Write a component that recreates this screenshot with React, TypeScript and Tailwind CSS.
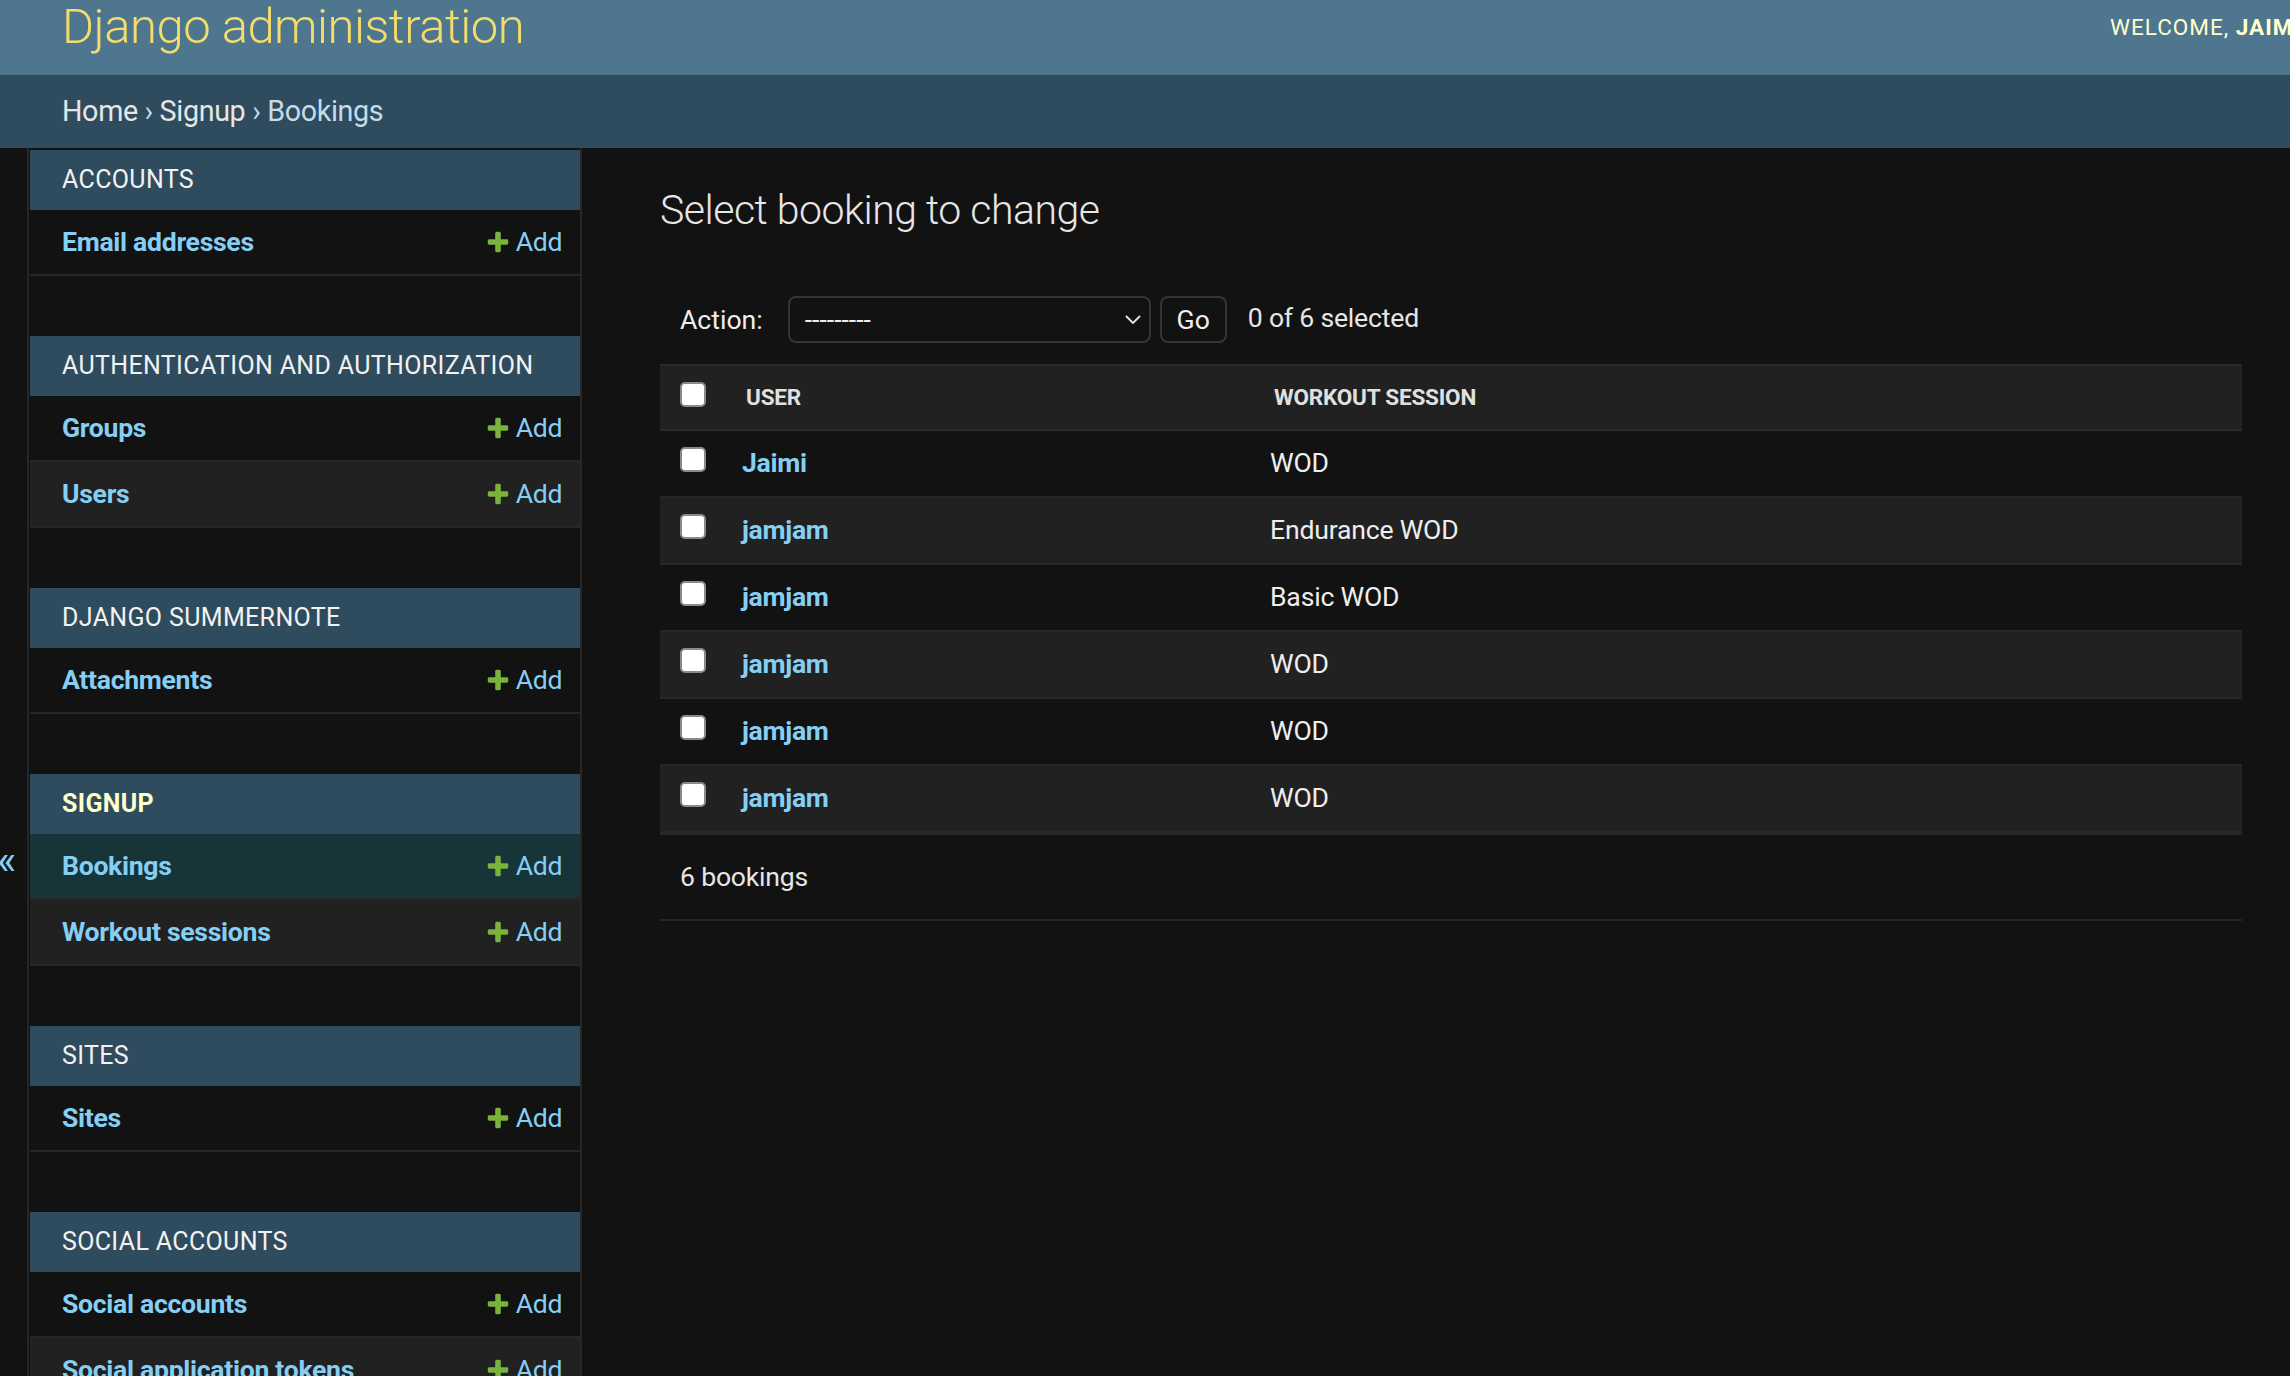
import React from "react";

const modules = [
  { name: "Accounts", models: ["Email addresses"] },
  { name: "Authentication and Authorization", models: ["Groups", "Users"] },
  { name: "Django Summernote", models: ["Attachments"] },
  { name: "Signup", models: ["Bookings", "Workout sessions"], current: true },
  { name: "Sites", models: ["Sites"] },
  {
    name: "Social accounts",
    models: ["Social accounts", "Social application tokens", "Social applications"],
  },
];

const bookings = [
  { user: "Jaimi", session: "WOD" },
  { user: "jamjam", session: "Endurance WOD" },
  { user: "jamjam", session: "Basic WOD" },
  { user: "jamjam", session: "WOD" },
  { user: "jamjam", session: "WOD" },
  { user: "jamjam", session: "WOD" },
];

function PlusIcon() {
  return (
    <svg viewBox="0 0 1792 1792" className="w-[26px] h-[26px] -mx-[3px]" fill="#78b43c">
      <path d="M1600 796v192q0 40-28 68t-68 28h-416v416q0 40-28 68t-68 28h-192q-40 0-68-28t-28-68v-416h-416q-40 0-68-28t-28-68v-192q0-40 28-68t68-28h416v-416q0-40 28-68t68-28h192q40 0 68 28t28 68v416h416q40 0 68 28t28 68z" />
    </svg>
  );
}

function Checkbox() {
  return <span className="block w-[26px] h-[25px] rounded-[5px] bg-white border-2 border-[#8a8a8a]"></span>;
}

export default function App() {
  return (
    <div className="w-[2290px] h-[1376px] overflow-hidden bg-[#121212] text-[#eeeeee] font-['Roboto','Liberation_Sans',sans-serif]">
      {/* Header */}
      <div className="h-[75px] bg-[#4f768f] flex pl-[62px] overflow-hidden">
        <div className="w-[2048px] shrink-0 pt-[2px]">
          <h1 className="text-[49px] leading-[49px] font-light tracking-[-0.5px] text-[#f3dc6a]">Django administration</h1>
        </div>
        <div className="pt-[16px] whitespace-nowrap text-[22.5px] leading-[22px] tracking-[1px] text-[#ffffcc]">
          WELCOME, <strong className="font-bold">JAIMI</strong>. VIEW SITE / CHANGE PASSWORD / LOG OUT
        </div>
      </div>

      {/* Breadcrumbs */}
      <div className="h-[73px] bg-[#2f4b5e] pl-[62px] pt-[22px] text-[28.7px] leading-[28px] tracking-[-0.35px] text-[#c4dce8]">
        <span className="text-[#e6e6e6]">Home</span> › <span className="text-[#e6e6e6]">Signup</span> › Bookings
      </div>

      <div className="flex">
        {/* Sidebar toggle */}
        <div className="w-[29px] shrink-0 border-r-2 border-[#262626] h-[1228px] overflow-hidden">
          <div className="pt-[692px] -ml-[3px] text-[41px] leading-[41px] text-[#85cff5]">«</div>
        </div>

        {/* Sidebar */}
        <div className="w-[552px] shrink-0 ml-[1px] border-r-2 border-[#262626] pt-[2px] h-[1228px]">
          {modules.map((m) => (
            <div key={m.name} className="mb-[60px]">
              <div
                className={`h-[60px] bg-[#2f4b5e] flex items-center pl-[32px] text-[25px] uppercase tracking-[0.35px] ${
                  m.current ? "font-bold text-[#ffffcc]" : "text-[#f2f2f2]"
                }`}
              >
                {m.name}
              </div>
              {m.models.map((model, i) => (
                <div
                  key={model}
                  className={`h-[66px] border-b-2 border-[#272727] flex items-center justify-between pl-[32px] pr-[18px] text-[26.6px] ${
                    model === "Bookings" ? "bg-[#173439]" : i % 2 === 1 ? "bg-[#212121]" : "bg-[#121212]"
                  }`}
                >
                  <span className="font-bold tracking-[-0.3px] text-[#85cff5]">{model}</span>
                  <span className="flex items-center gap-[8px] tracking-[-0.4px] text-[#85cff5]">
                    <PlusIcon />
                    Add
                  </span>
                </div>
              ))}
            </div>
          ))}
        </div>

        {/* Content */}
        <div className="flex-1 pl-[78px] pr-[48px] pt-[42px]">
          <h1 className="text-[41px] leading-[41px] font-light tracking-[-0.5px] text-[#e6e6e6]">Select booking to change</h1>

          <div className="mt-[65px] h-[47px] flex items-center pl-[20px] text-[26.6px]">
            <span className="text-[#eeeeee]">Action:</span>
            <div className="ml-[25px] w-[363px] h-[47px] border-2 border-[#353535] rounded-[8px] flex items-center justify-between pl-[15px] pr-[8px]">
              <span className="text-[26.6px]">---------</span>
              <svg viewBox="0 0 16 9" className="w-[16px] h-[9px]" fill="none" stroke="#e6e6e6" strokeWidth="1.8">
                <polyline points="1,1 8,8 15,1" />
              </svg>
            </div>
            <div className="ml-[9px] w-[67px] h-[47px] border-2 border-[#353535] rounded-[8px] flex items-center justify-center">
              Go
            </div>
            <span className="ml-[21px] -mt-[3px] tracking-[-0.2px] text-[#e6e6e6]">0 of 6 selected</span>
          </div>

          {/* Results table */}
          <div className="mt-[21px]">
            <div className="grid grid-cols-[66px_528px_1fr] h-[67px] bg-[#212121] border-t-2 border-b-2 border-[#292929] text-[22.5px] font-bold uppercase tracking-[-0.2px] text-[#e0e0e0]">
              <div className="pl-[20px] pt-[16px]">
                <Checkbox />
              </div>
              <div className="pl-[20px] flex items-center">User</div>
              <div className="pl-[20px] flex items-center">Workout session</div>
            </div>
            {bookings.map((b, i) => (
              <div
                key={i}
                className={`grid grid-cols-[66px_528px_1fr] h-[67px] border-b-2 border-[#272727] text-[26.6px] leading-[32.8px] ${
                  i % 2 === 1 ? "bg-[#212121]" : "bg-[#121212]"
                }`}
              >
                <div className="pl-[20px] pt-[16px]">
                  <Checkbox />
                </div>
                <div className="pl-[16px] pt-[16.4px] font-bold tracking-[-0.3px] text-[#85cff5]">{b.user}</div>
                <div className="pl-[16px] pt-[16.4px] tracking-[-0.2px] text-[#eeeeee]">{b.session}</div>
              </div>
            ))}
            <div className="border-t-2 border-b-2 border-[#272727] pl-[20px] pt-[19px] pb-[20px] text-[26.6px] leading-[45px] tracking-[-0.2px] text-[#e6e6e6]">
              6 bookings
            </div>
          </div>
        </div>
      </div>
    </div>
  );
}
